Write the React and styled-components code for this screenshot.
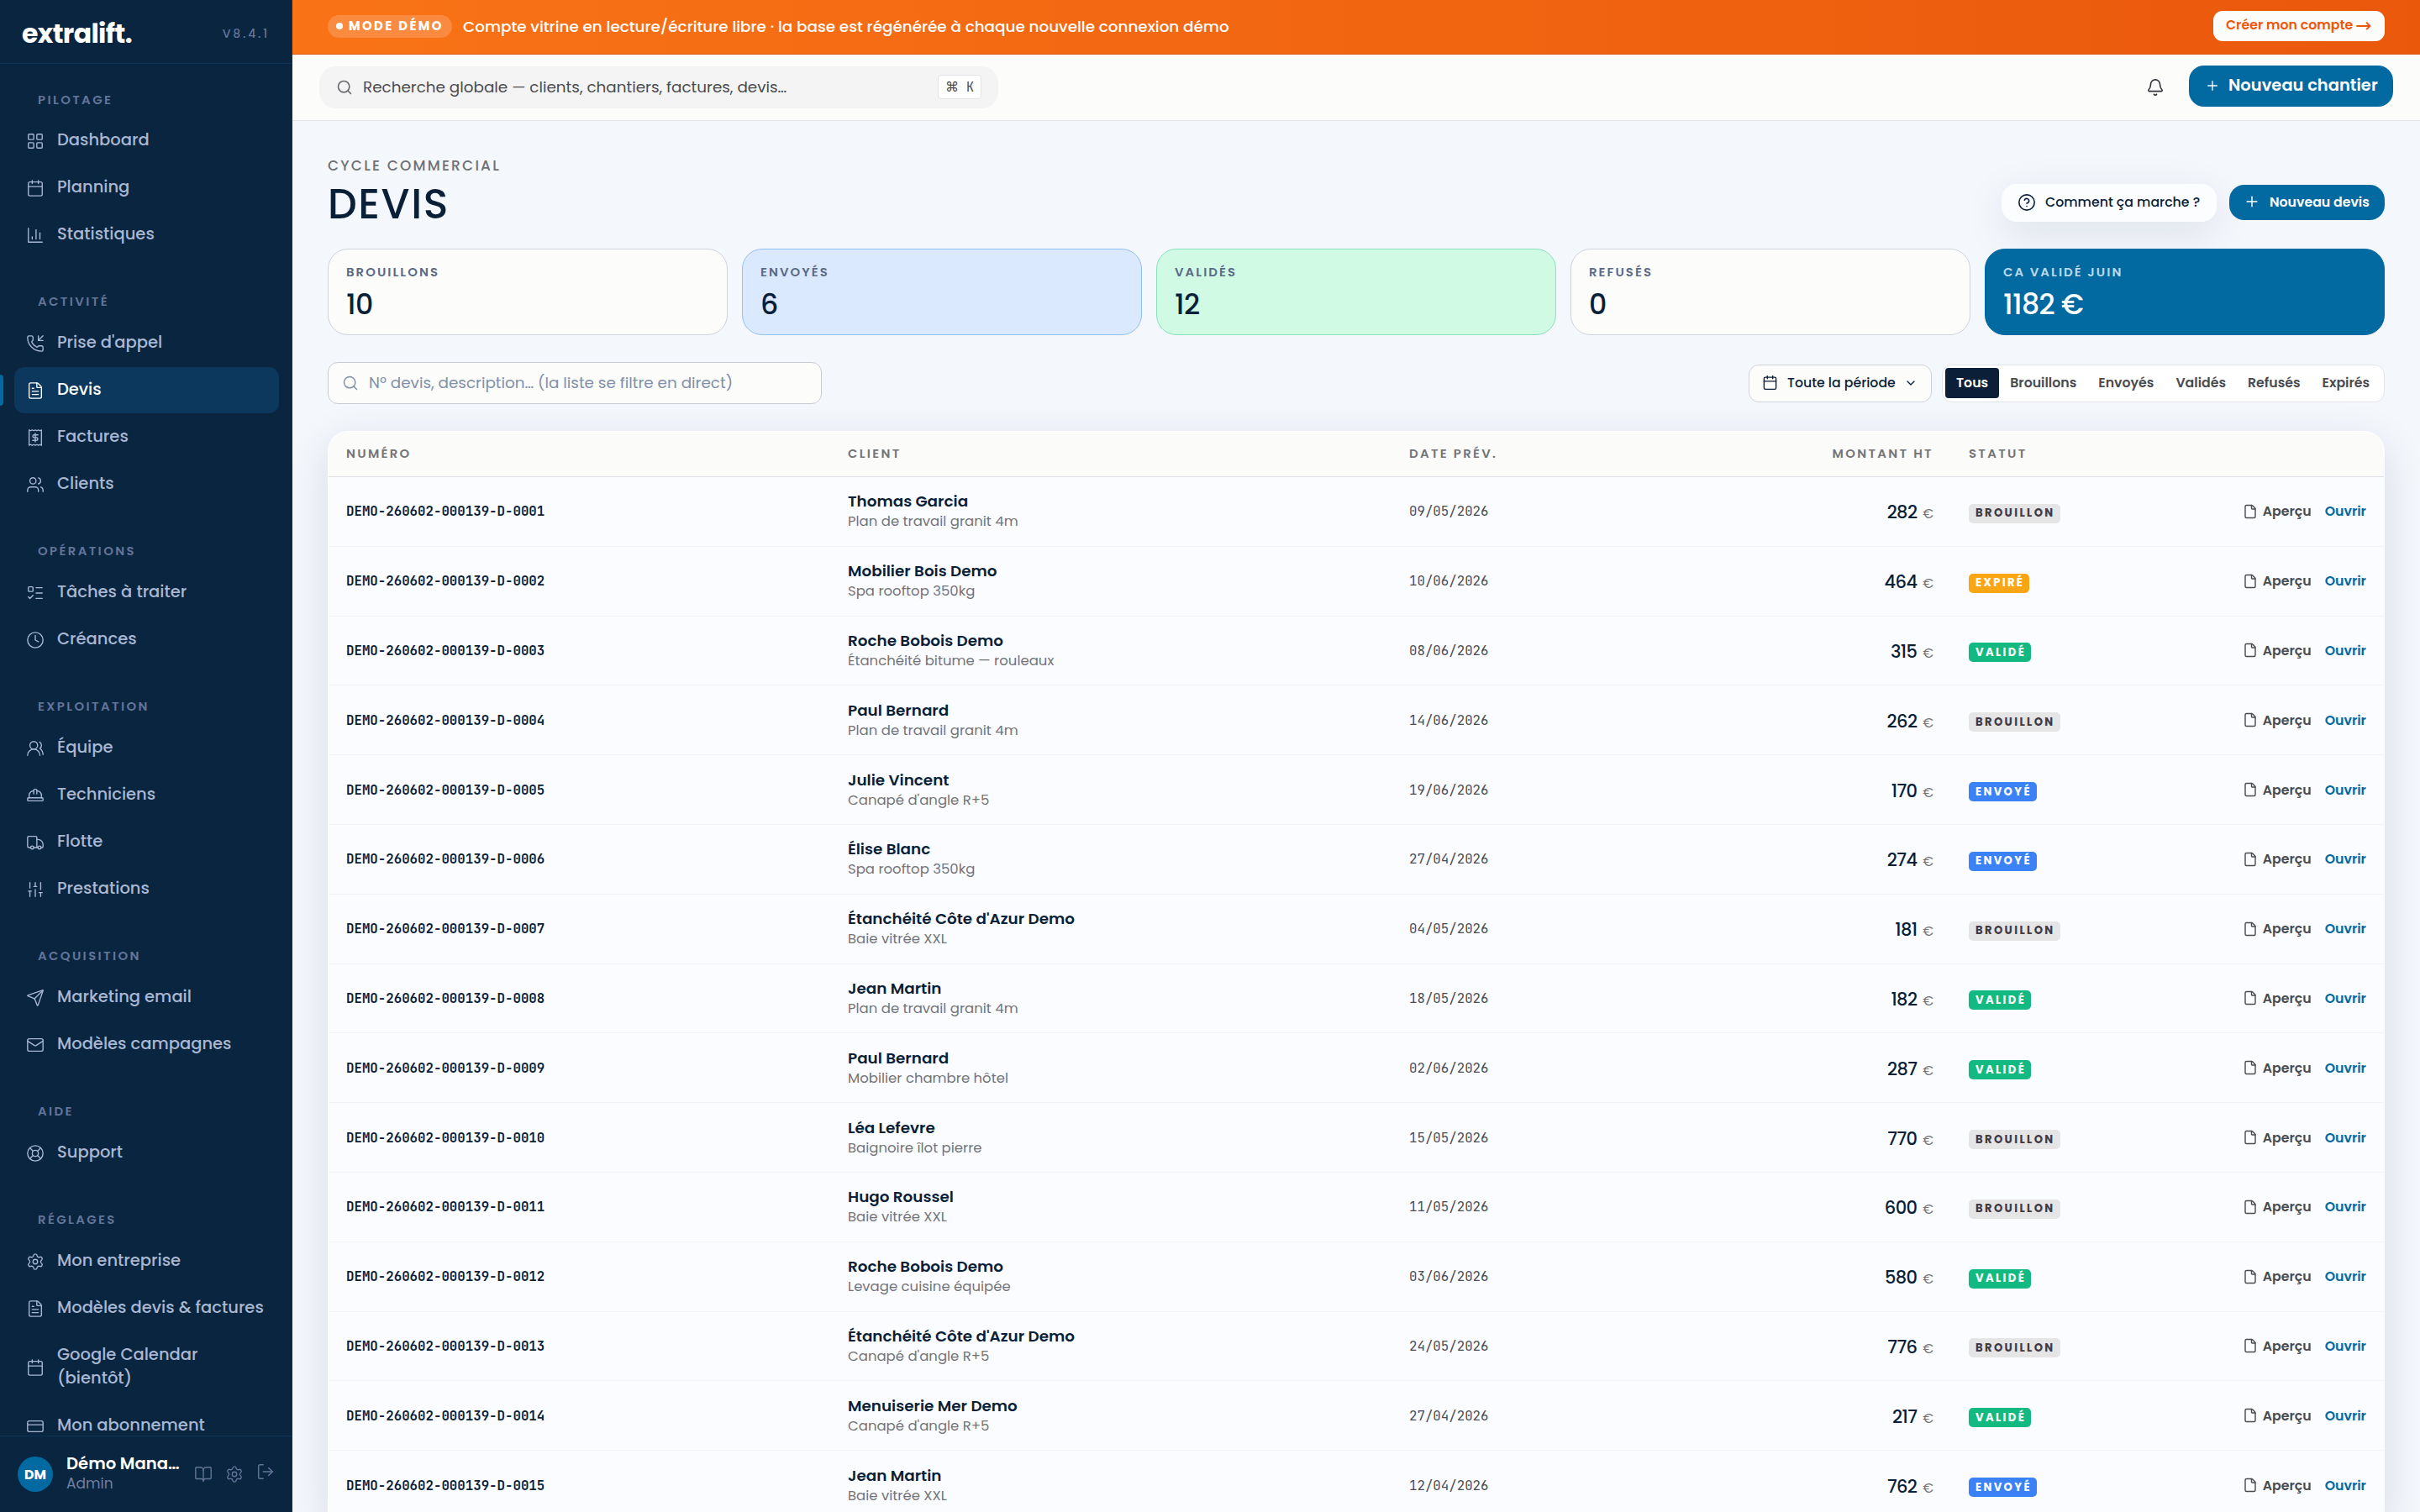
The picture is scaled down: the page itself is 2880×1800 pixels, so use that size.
import React from "react";
import styled, { createGlobalStyle } from "styled-components";
import {
  Bell,
  BookOpen,
  Calendar,
  ChevronDown,
  CircleHelp,
  Clock,
  CreditCard,
  File,
  FileText,
  HardHat,
  LayoutGrid,
  LifeBuoy,
  ListTodo,
  LogOut,
  Mail,
  PhoneIncoming,
  Plus,
  Search,
  Send,
  Settings,
  SlidersVertical,
  Users,
  UsersRound,
} from "lucide-react";

const GlobalStyle = createGlobalStyle`
  * { box-sizing: border-box; }
  html, body { margin: 0; padding: 0; height: 100%; overflow: hidden; }
  body {
    background: #f4f7fc;
    color: #0a1f38;
    font-family: "Poppins", Inter, "Open Sans", sans-serif;
  }
  button { font-family: inherit; border: none; cursor: pointer; margin: 0; }
  svg { display: block; flex-shrink: 0; }
`;

const Glyph = ({ size = 22, strokeWidth = 1.5, children }) => (
  <svg
    width={size}
    height={size}
    viewBox="0 0 24 24"
    fill="none"
    stroke="currentColor"
    strokeWidth={strokeWidth}
    strokeLinecap="round"
    strokeLinejoin="round"
  >
    {children}
  </svg>
);

const StatsIcon = (props) => (
  <Glyph {...props}>
    <path d="M3 3v18h18" />
    <path d="M18 17V9" />
    <path d="M13 17V5" />
    <path d="M8 17v-3" />
  </Glyph>
);

const TruckIcon = (props) => (
  <Glyph {...props}>
    <path d="M6 18.500H4a2 2 0 0 1-2-2v-11a1.500 1.500 0 0 1 1.500-1.500h9A1.500 1.500 0 0 1 14 5.500v13" />
    <path d="M10 18.500h5.500" />
    <path d="M14 8h1.500c3.600 0 6.500 3 6.500 6.500v3a1 1 0 0 1-1 1h-1.500" />
    <circle cx="8" cy="18.500" r="2" />
    <circle cx="17.500" cy="18.500" r="2" />
  </Glyph>
);

const ReceiptIcon = (props) => (
  <Glyph {...props}>
    <path d="M4 2v20l2-1 2 1 2-1 2 1 2-1 2 1 2-1 2 1V2l-2 1-2-1-2 1-2-1-2 1-2-1-2 1Z" />
    <path d="M15.500 8.500h-5a1.750 1.750 0 0 0 0 3.500h3a1.750 1.750 0 0 1 0 3.500h-5" />
    <path d="M12 17.500v-11" />
  </Glyph>
);

const NAV = [
  {
    label: "Pilotage",
    items: [
      { text: "Dashboard", icon: LayoutGrid },
      { text: "Planning", icon: Calendar },
      { text: "Statistiques", icon: StatsIcon },
    ],
  },
  {
    label: "Activité",
    items: [
      { text: "Prise d'appel", icon: PhoneIncoming },
      { text: "Devis", icon: FileText, active: true },
      { text: "Factures", icon: ReceiptIcon },
      { text: "Clients", icon: Users },
    ],
  },
  {
    label: "Opérations",
    items: [
      { text: "Tâches à traiter", icon: ListTodo },
      { text: "Créances", icon: Clock },
    ],
  },
  {
    label: "Exploitation",
    items: [
      { text: "Équipe", icon: UsersRound },
      { text: "Techniciens", icon: HardHat },
      { text: "Flotte", icon: TruckIcon },
      { text: "Prestations", icon: SlidersVertical },
    ],
  },
  {
    label: "Acquisition",
    items: [
      { text: "Marketing email", icon: Send },
      { text: "Modèles campagnes", icon: Mail },
    ],
  },
  { label: "Aide", items: [{ text: "Support", icon: LifeBuoy }] },
  {
    label: "Réglages",
    items: [
      { text: "Mon entreprise", icon: Settings },
      { text: "Modèles devis & factures", icon: FileText },
      { text: "Google Calendar (bientôt)", icon: Calendar },
      { text: "Mon abonnement", icon: CreditCard },
    ],
  },
];

const STATS = [
  { label: "Brouillons", value: "10", tone: "plain" },
  { label: "Envoyés", value: "6", tone: "blue" },
  { label: "Validés", value: "12", tone: "green" },
  { label: "Refusés", value: "0", tone: "plain" },
  { label: "CA validé juin", value: "1182 €", tone: "solid" },
];

const FILTERS = ["Tous", "Brouillons", "Envoyés", "Validés", "Refusés", "Expirés"];

const QUOTES = [
  ["Thomas Garcia", "Plan de travail granit 4m", "09/05/2026", 282, "Brouillon"],
  ["Mobilier Bois Demo", "Spa rooftop 350kg", "10/06/2026", 464, "Expiré"],
  ["Roche Bobois Demo", "Étanchéité bitume — rouleaux", "08/06/2026", 315, "Validé"],
  ["Paul Bernard", "Plan de travail granit 4m", "14/06/2026", 262, "Brouillon"],
  ["Julie Vincent", "Canapé d'angle R+5", "19/06/2026", 170, "Envoyé"],
  ["Élise Blanc", "Spa rooftop 350kg", "27/04/2026", 274, "Envoyé"],
  ["Étanchéité Côte d'Azur Demo", "Baie vitrée XXL", "04/05/2026", 181, "Brouillon"],
  ["Jean Martin", "Plan de travail granit 4m", "18/05/2026", 182, "Validé"],
  ["Paul Bernard", "Mobilier chambre hôtel", "02/06/2026", 287, "Validé"],
  ["Léa Lefevre", "Baignoire îlot pierre", "15/05/2026", 770, "Brouillon"],
  ["Hugo Roussel", "Baie vitrée XXL", "11/05/2026", 600, "Brouillon"],
  ["Roche Bobois Demo", "Levage cuisine équipée", "03/06/2026", 580, "Validé"],
  ["Étanchéité Côte d'Azur Demo", "Canapé d'angle R+5", "24/05/2026", 776, "Brouillon"],
  ["Menuiserie Mer Demo", "Canapé d'angle R+5", "27/04/2026", 217, "Validé"],
  ["Jean Martin", "Baie vitrée XXL", "12/04/2026", 762, "Envoyé"],
];

const App = () => (
  <Shell>
    <GlobalStyle />
    <Sidebar>
      <Brand>
        <Logo>extralift.</Logo>
        <Version>V8.4.1</Version>
      </Brand>
      <Nav>
        {NAV.map((section) => (
          <React.Fragment key={section.label}>
            <NavLabel>{section.label}</NavLabel>
            {section.items.map(({ text, icon: Icon, active }) => (
              <NavItem key={text} $active={active}>
                <Icon size={22} strokeWidth={1.5} />
                <NavText>{text}</NavText>
              </NavItem>
            ))}
          </React.Fragment>
        ))}
      </Nav>
      <UserBar>
        <Avatar>DM</Avatar>
        <UserInfo>
          <UserName>Démo Mana…</UserName>
          <UserRole>Admin</UserRole>
        </UserInfo>
        <UserActions>
          <BookOpen size={22} strokeWidth={1.5} />
          <Settings size={22} strokeWidth={1.5} />
          <LogoutSlot>
            <LogOut size={22} strokeWidth={1.5} />
          </LogoutSlot>
        </UserActions>
      </UserBar>
    </Sidebar>

    <Main>
      <Banner>
        <DemoPill>
          <Dot />
          Mode démo
        </DemoPill>
        <BannerText>
          Compte vitrine en lecture/écriture libre · la base est régénérée à chaque nouvelle
          connexion démo
        </BannerText>
        <BannerButton>
          Créer mon compte <Arrow>→</Arrow>
        </BannerButton>
      </Banner>

      <Topbar>
        <GlobalSearch>
          <Search size={20} strokeWidth={2} />
          <span>Recherche globale — clients, chantiers, factures, devis…</span>
          <Kbd>
            <Command>⌘</Command>K
          </Kbd>
        </GlobalSearch>
        <BellButton>
          <Bell size={22} strokeWidth={1.75} />
        </BellButton>
        <PrimaryButton $large>
          <Plus size={18} strokeWidth={1.75} />
          Nouveau chantier
        </PrimaryButton>
      </Topbar>

      <Content>
        <PageHead>
          <div>
            <Eyebrow>Cycle commercial</Eyebrow>
            <Title>DEVIS</Title>
          </div>
          <HeadActions>
            <HelpButton>
              <CircleHelp size={22} strokeWidth={1.75} />
              Comment ça marche ?
            </HelpButton>
            <PrimaryButton>
              <Plus size={20} strokeWidth={1.75} />
              Nouveau devis
            </PrimaryButton>
          </HeadActions>
        </PageHead>

        <Stats>
          {STATS.map((stat) => (
            <StatCard key={stat.label} $tone={stat.tone}>
              <StatLabel>{stat.label}</StatLabel>
              <StatValue>{stat.value}</StatValue>
            </StatCard>
          ))}
        </Stats>

        <Toolbar>
          <SearchField>
            <Search size={20} strokeWidth={1.75} />
            <span>Nº devis, description… (la liste se filtre en direct)</span>
          </SearchField>
          <Filters>
            <PeriodButton>
              <Calendar size={19} strokeWidth={1.75} />
              <span>Toute la période</span>
              <ChevronDown size={16} strokeWidth={2} />
            </PeriodButton>
            <Segmented>
              {FILTERS.map((name, i) => (
                <Segment key={name} $active={i === 0}>
                  {name}
                </Segment>
              ))}
            </Segmented>
          </Filters>
        </Toolbar>

        <Table>
          <HeadRow>
            <span>Numéro</span>
            <span>Client</span>
            <span>Date prév.</span>
            <span>Montant HT</span>
            <span>Statut</span>
          </HeadRow>
          {QUOTES.map(([client, work, date, amount, status], i) => (
            <Row key={i}>
              <Ref>DEMO-260602-000139-D-{String(i + 1).padStart(4, "0")}</Ref>
              <div>
                <ClientName>{client}</ClientName>
                <ClientWork>{work}</ClientWork>
              </div>
              <DateCell>{date}</DateCell>
              <Amount>
                {amount} <Euro>€</Euro>
              </Amount>
              <StatusCell>
                <Badge $status={status}>{status}</Badge>
              </StatusCell>
              <RowActions>
                <Preview>
                  <File size={18} strokeWidth={1.9} />
                  Aperçu
                </Preview>
                <OpenLink>Ouvrir</OpenLink>
              </RowActions>
            </Row>
          ))}
        </Table>
      </Content>
    </Main>
  </Shell>
);

const Shell = styled.div`
  display: flex;
  width: 100vw;
  height: 100vh;
  overflow: hidden;
`;

/* ---------- sidebar ---------- */

const Sidebar = styled.aside`
  display: flex;
  flex-direction: column;
  width: 348px;
  flex-shrink: 0;
  background: #0a2540;
  border-right: 1px solid #0d3357;
`;

const Brand = styled.div`
  display: flex;
  align-items: center;
  justify-content: space-between;
  height: 76px;
  flex-shrink: 0;
  padding: 5px 26px 0 26px;
  border-bottom: 1px solid #0d3357;
`;

const Logo = styled.div`
  color: #fff;
  font-size: 31.5px;
  font-weight: 700;
  letter-spacing: -0.02em;
`;

const Version = styled.div`
  color: #64769a;
  font-size: 14px;
  font-weight: 500;
  letter-spacing: 2.8px;
`;

const Nav = styled.nav`
  flex: 1;
  min-height: 0;
  overflow: hidden;
  padding: 1px 15px 0 17px;
`;

const NavLabel = styled.div`
  height: 73px;
  padding: 41px 0 0 28px;
  color: #64759a;
  font-size: 14.875px;
  line-height: 20px;
  font-weight: 600;
  letter-spacing: 0.16em;
  text-transform: uppercase;

  &:first-child {
    height: 63px;
    padding-top: 32px;
  }
`;

const NavItem = styled.div`
  position: relative;
  display: flex;
  align-items: center;
  gap: 15px;
  min-height: 54.5px;
  margin-bottom: 1.5px;
  padding: 13.25px 14px 13.25px;
  border-radius: 12px;
  color: ${(p) => (p.$active ? "#fff" : "#a9b8d2")};
  background: ${(p) => (p.$active ? "#0b385c" : "transparent")};

  svg {
    position: relative;
    top: 1px;
  }

  &::before {
    content: "";
    display: ${(p) => (p.$active ? "block" : "none")};
    position: absolute;
    left: -17px;
    top: 9px;
    width: 4px;
    height: 37px;
    border-radius: 0 4px 4px 0;
    background: #0369a1;
  }
`;

const NavText = styled.span`
  font-size: 19.5px;
  line-height: 28px;
  font-weight: 500;
`;

const UserBar = styled.div`
  display: flex;
  align-items: center;
  height: 91px;
  flex-shrink: 0;
  padding: 0 20px 0 21px;
  border-top: 1px solid #0d3357;
`;

const Avatar = styled.div`
  display: grid;
  place-items: center;
  width: 42px;
  height: 42px;
  border-radius: 50%;
  background: #0369a1;
  color: #fff;
  font-size: 15.75px;
  font-weight: 700;
`;

const UserInfo = styled.div`
  width: 136px;
  margin-left: 16px;
  padding-bottom: 2px;
  white-space: nowrap;
`;

const UserName = styled.div`
  color: #fff;
  font-size: 19.6px;
  line-height: 24px;
  font-weight: 600;
`;

const UserRole = styled.div`
  color: #6f80a3;
  font-size: 17px;
  line-height: 24px;
`;

const UserActions = styled.div`
  display: flex;
  align-items: center;
  gap: 15px;
  margin-left: 15.5px;
  color: #64759a;
`;

const LogoutSlot = styled.span`
  padding-bottom: 6px;
`;

/* ---------- top ---------- */

const Main = styled.main`
  display: flex;
  flex-direction: column;
  flex: 1;
  min-width: 0;
`;

const Banner = styled.div`
  display: flex;
  align-items: center;
  height: 65px;
  flex-shrink: 0;
  padding: 0 42px 2px;
  color: #fff;
  background: linear-gradient(90deg, #f97316, #ea580c);
  border-bottom: 1px solid #d95a12;
`;

const DemoPill = styled.div`
  display: flex;
  align-items: center;
  gap: 7px;
  width: 148px;
  height: 27px;
  padding-left: 10px;
  border-radius: 14px;
  background: rgba(255, 255, 255, 0.18);
  font-size: 14.875px;
  font-weight: 700;
  letter-spacing: 0.16em;
  text-transform: uppercase;
  white-space: nowrap;
`;

const Dot = styled.i`
  width: 8px;
  height: 8px;
  border-radius: 50%;
  background: #fff;
`;

const BannerText = styled.div`
  margin-left: 13px;
  font-size: 18.375px;
  font-weight: 500;
`;

const BannerButton = styled.button`
  display: flex;
  align-items: center;
  gap: 3px;
  width: 204px;
  height: 36px;
  margin-left: auto;
  padding: 0 0 2px 15px;
  border-radius: 11px;
  background: #fcfcfa;
  color: #ea580c;
  font-size: 15.75px;
  line-height: 20px;
  font-weight: 600;
  white-space: nowrap;
`;

const Arrow = styled.span`
  padding-bottom: 1px;
  font-family: "DejaVu Sans", sans-serif;
  font-size: 23px;
  line-height: 20px;
  font-weight: 400;
`;

const Topbar = styled.header`
  display: flex;
  align-items: center;
  height: 79px;
  flex-shrink: 0;
  padding: 0 32px 0;
  background: #fcfcfa;
  border-bottom: 1px solid #e2e4e7;
`;

const GlobalSearch = styled.div`
  display: flex;
  align-items: center;
  width: 808px;
  height: 50px;
  padding: 0 20px;
  margin-bottom: 1px;
  border-radius: 20px;
  background: #f4f4f4;
  color: #4b4b4f;
  font-size: 18.375px;

  > span {
    margin-left: 12px;
    padding-bottom: 1px;
  }
  > svg {
    color: #6c6c70;
  }
`;

const Kbd = styled.kbd`
  display: flex;
  align-items: center;
  justify-content: center;
  gap: 9px;
  width: 52px;
  height: 29px;
  margin-left: auto;
  border: 1px solid #e2e3e8;
  border-radius: 4px;
  background: #fff;
  font-family: "JetBrains Mono", "DejaVu Sans Mono", monospace;
  font-size: 15px;
`;

const Command = styled.span`
  font-family: "DejaVu Sans", sans-serif;
  font-size: 16px;
`;

const BellButton = styled.div`
  margin-left: auto;
  padding: 0 29px 1px 0;
  color: #33333a;
`;

const PrimaryButton = styled.button`
  display: flex;
  align-items: center;
  gap: ${(p) => (p.$large ? 10 : 11)}px;
  width: ${(p) => (p.$large ? 243 : 185)}px;
  height: ${(p) => (p.$large ? 49 : 42)}px;
  margin-bottom: ${(p) => (p.$large ? 3 : 0)}px;
  padding: 0 0 2px ${(p) => (p.$large ? 19 : 17)}px;
  border-radius: 18px;
  background: #0369a1;
  color: #fff;
  font-size: ${(p) => (p.$large ? 19.5 : 15.75)}px;
  font-weight: 600;
  white-space: nowrap;
`;

/* ---------- page ---------- */

const Content = styled.section`
  flex: 1;
  min-height: 0;
  padding: 40px 42px 0;
`;

const PageHead = styled.div`
  display: flex;
  justify-content: space-between;
  height: 112px;
`;

const Eyebrow = styled.div`
  color: #6f7072;
  font-size: 17px;
  line-height: 27px;
  font-weight: 500;
  letter-spacing: 0.13em;
  text-transform: uppercase;
`;

const Title = styled.h1`
  margin: 2px 0 0;
  font-size: 49px;
  line-height: 60px;
  font-weight: 500;
  letter-spacing: 1.6px;
`;

const HeadActions = styled.div`
  display: flex;
  align-items: center;
  gap: 15px;
  height: 46px;
  margin-top: 34px;
`;

const HelpButton = styled.button`
  display: flex;
  align-items: center;
  gap: 11px;
  width: 256px;
  height: 45px;
  padding: 0 0 1px 19px;
  border-radius: 18px;
  background: #fcfdff;
  box-shadow: 0 14px 50px rgba(10, 31, 56, 0.1);
  color: #0a1f38;
  font-size: 15.75px;
  font-weight: 500;
  white-space: nowrap;
`;

const Stats = styled.div`
  display: grid;
  grid-template-columns: repeat(5, 1fr);
  gap: 17px;
`;

const TONES = {
  plain: { bg: "#fcfcfa", border: "#cfd3db", label: "#5a6a85", value: "#0a1f38" },
  blue: { bg: "#dbe9fe", border: "#8fc1f5", label: "#5a6a85", value: "#0a1f38" },
  green: { bg: "#d0fae4", border: "#86e2bb", label: "#5a6a85", value: "#0a1f38" },
  solid: { bg: "#0369a1", border: "#0369a1", label: "#bcd9ec", value: "#fff" },
};

const StatCard = styled.div`
  height: 103px;
  padding: 17px 21px;
  border: 1px solid ${(p) => TONES[p.$tone].border};
  border-radius: 24px;
  background: ${(p) => TONES[p.$tone].bg};
  color: ${(p) => TONES[p.$tone].value};

  > :first-child {
    color: ${(p) => TONES[p.$tone].label};
  }
`;

const StatLabel = styled.div`
  font-size: 14.875px;
  line-height: 20px;
  font-weight: 600;
  letter-spacing: 2.05px;
  text-transform: uppercase;
`;

const StatValue = styled.div`
  margin-top: 7px;
  font-size: 33.25px;
  line-height: 44px;
  font-weight: 500;
  letter-spacing: -0.02em;
`;

const Toolbar = styled.div`
  display: flex;
  align-items: center;
  justify-content: space-between;
  height: 50px;
  margin-top: 32px;
`;

const SearchField = styled.div`
  display: flex;
  align-items: center;
  gap: 12px;
  width: 588px;
  height: 50px;
  padding: 0 0 1px 16px;
  border: 1px solid #c9ccd2;
  border-radius: 12px;
  background: #fcfcfa;
  color: #8090a8;
  font-size: 18.375px;
`;

const Filters = styled.div`
  display: flex;
  gap: 12px;
`;

const PeriodButton = styled.button`
  display: flex;
  align-items: center;
  width: 218px;
  height: 45px;
  padding: 0 0 1px 15px;
  border: 1px solid #cfd2d8;
  border-radius: 12px;
  background: #fcfcfa;
  color: #0a1f38;
  font-size: 15.75px;
  font-weight: 500;

  > span {
    width: 130px;
    margin: 0 9px 0 11px;
    text-align: left;
    white-space: nowrap;
  }
`;

const Segmented = styled.div`
  display: flex;
  align-items: center;
  width: 527px;
  height: 45px;
  padding: 0 3px;
  border: 1px solid #e2e4e8;
  border-radius: 12px;
  background: #fff;
`;

const Segment = styled.button`
  height: 36px;
  padding: 0 13px 1px;
  border-radius: 4px;
  background: ${(p) => (p.$active ? "#0b1f38" : "transparent")};
  color: ${(p) => (p.$active ? "#fff" : "#4b4b4f")};
  font-size: 15.75px;
  font-weight: 600;
`;

/* ---------- table ---------- */

const Table = styled.div`
  margin-top: 32px;
  border: 1px solid #fff;
  border-radius: 24px 24px 0 0;
  background: #fbfcff;
  box-shadow: 0 14px 52px rgba(10, 31, 56, 0.12);
  overflow: hidden;
`;

const HeadRow = styled.div`
  display: grid;
  grid-template-columns: 597px 668px 623px 43px 1fr;
  align-items: center;
  height: 54px;
  padding: 0 21px 1px;
  background: #fbfbfa;
  border-bottom: 1px solid #dde0e5;
  color: #737477;
  font-size: 14.875px;
  font-weight: 600;
  letter-spacing: 0.155em;
  text-transform: uppercase;

  > :nth-child(4) {
    justify-self: end;
    margin-right: 42px;
    white-space: nowrap;
  }
`;

const Row = styled.div`
  display: grid;
  grid-template-columns: 597px 668px 623px 43px 1fr auto;
  align-items: center;
  height: 82.8px;
  padding: 0 21px;
  border-bottom: 1px solid #f0f2f4;
`;

const Ref = styled.div`
  font-family: "JetBrains Mono", "DejaVu Sans Mono", monospace;
  font-size: 15.75px;
  font-weight: 700;
`;

const ClientName = styled.div`
  font-size: 18.375px;
  line-height: 25px;
  font-weight: 600;
`;

const ClientWork = styled.div`
  color: #737477;
  font-size: 16.5px;
  line-height: 24px;
`;

const DateCell = styled.div`
  color: #4b4b4f;
  font-family: "JetBrains Mono", "DejaVu Sans Mono", monospace;
  font-size: 15.75px;
`;

const Amount = styled.div`
  justify-self: end;
  margin-right: 42px;
  padding-top: 2px;
  font-size: 21px;
  font-weight: 500;
  letter-spacing: -0.03em;
  white-space: nowrap;
`;

const Euro = styled.span`
  margin-left: 2px;
  color: #737477;
  font-size: 15.75px;
  font-weight: 400;
  letter-spacing: 0;
`;

const StatusCell = styled.div`
  display: flex;
  padding-top: 5px;
`;

const BADGES = {
  Brouillon: ["#e5e5e5", "#3f3a44"],
  Expiré: ["#faa614", "#fff"],
  Validé: ["#12b981", "#fff"],
  Envoyé: ["#3b82f6", "#fff"],
};

const Badge = styled.span`
  display: flex;
  align-items: center;
  height: 23px;
  padding: 0 6px 0 8px;
  border-radius: 5px;
  background: ${(p) => BADGES[p.$status][0]};
  color: ${(p) => BADGES[p.$status][1]};
  font-size: 13.125px;
  font-weight: 700;
  letter-spacing: 0.18em;
  text-transform: uppercase;
`;

const RowActions = styled.div`
  display: flex;
  align-items: center;
  gap: 16px;
  font-size: 15.75px;
  font-weight: 600;
`;

const Preview = styled.span`
  display: flex;
  align-items: center;
  gap: 6px;
  color: #4b4b4f;
`;

const OpenLink = styled.span`
  color: #0369a1;
`;

export default App;
